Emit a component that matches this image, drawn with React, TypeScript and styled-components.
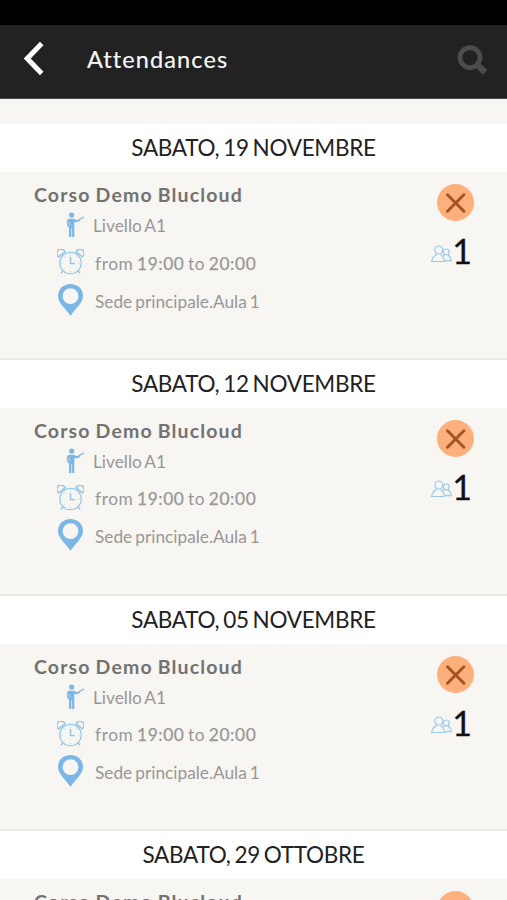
import React from "react";
import styled, { createGlobalStyle } from "styled-components";

const GlobalStyle = createGlobalStyle`
  * { box-sizing: border-box; }
  body { margin: 0; background: #f8f6f3; font-family: Lato, "Open Sans", sans-serif; }
`;

const Screen = styled.div`
  width: 507px;
  height: 900px;
  overflow: hidden;
  background: #f8f6f3;
`;
const StatusBar = styled.div`
  height: 25px;
  background: #000;
`;
const Toolbar = styled.header`
  display: flex;
  align-items: center;
  height: 74px;
  padding: 0 19px 6px 23px;
  background: #222;
  border-bottom: 1px solid #4b4a49;
`;
const Title = styled.h1`
  flex: 1;
  margin: 1px 0 0 42px;
  font-size: 23.5px;
  line-height: 30px;
  font-weight: 400;
  letter-spacing: 1.1px;
  color: #fafafa;
  -webkit-text-stroke: 0.15px #fafafa;
`;
const List = styled.main`
  padding-top: 25px;
`;
const Day = styled.section`
  height: 235.75px;
`;
const DayHeading = styled.h2`
  height: 48px;
  margin: 0;
  background: #fff;
  text-align: center;
  font-size: 22.5px;
  line-height: 48px;
  font-weight: 400;
  letter-spacing: -0.3px;
  word-spacing: -1.6px;
  color: #222;
`;
const Lesson = styled.div`
  display: flex;
  justify-content: space-between;
  height: 187.75px;
  padding: 11px 33px 0 34px;
  border-bottom: 2px solid #ebeae8;
`;
const Course = styled.h3`
  margin: -1px 0 1px;
  font-size: 19.5px;
  line-height: 25px;
  font-weight: 700;
  letter-spacing: 1.15px;
  word-spacing: -1px;
  color: #737271;
`;
const Detail = styled.div<{ $height: number; $gap: number }>`
  display: flex;
  align-items: center;
  height: ${(p) => p.$height}px;
  margin-left: 23px;
  gap: ${(p) => p.$gap}px;
`;
const DetailText = styled.span<{ $spacing?: number; $top?: number }>`
  padding-top: ${(p) => p.$top ?? 2}px;
  font-size: 17.3px;
  line-height: 24px;
  letter-spacing: ${(p) => p.$spacing ?? 0}px;
  word-spacing: -1.4px;
  color: #989795;
`;
const Time = styled.span`
  -webkit-text-stroke: 0.25px #989795;
`;
const Summary = styled.div`
  display: flex;
  flex-direction: column;
  align-items: flex-end;
`;
const Absent = styled.div`
  display: flex;
  align-items: center;
  justify-content: center;
  width: 37px;
  height: 37px;
  margin-top: 1px;
  border-radius: 50%;
  background: #fdaf7c;
`;
const Count = styled.div`
  display: flex;
  align-items: center;
  height: 40px;
  margin: 10px 2px 0 0;
  font-size: 34px;
  line-height: 40px;
  color: #111;
  -webkit-text-stroke: 0.3px #111;

  svg { margin-top: 6px; }
`;

const BackIcon = () => (
  <svg width="22" height="36" viewBox="0 0 22 36" fill="none" stroke="#fff" strokeWidth="5">
    <path d="M18.7 2.5 4.2 17.5l14.5 15" />
  </svg>
);
const SearchIcon = () => (
  <svg width="32" height="32" viewBox="0 0 32 32" fill="none" stroke="#4c4c4c">
    <circle cx="14" cy="14.6" r="10" strokeWidth="4.8" />
    <path d="M20.5 21 29 29.4" strokeWidth="6.4" />
  </svg>
);
const TeacherIcon = () => (
  <svg width="30" height="26" viewBox="0 0 30 26" fill="#7bb6e6">
    <circle cx="14.7" cy="3.1" r="2.6" />
    <path d="M12 6.8h5.2l2.6 1.4 3-1.3.7 1.4-3.7 2.2-2.5-.7V25h-2.2v-9h-.7v9H12v-9.5c-1.3-1.2-2.2-2.7-2.2-4.6 0-2.3.8-3.9 2.2-4.1Z" />
    <path d="m21.5 8 5.4-3" stroke="#7bb6e6" strokeWidth="1.2" />
    <path d="m12.2 9.8-.7 1.6 1.5 2" fill="none" stroke="#dcebf5" strokeWidth=".8" />
  </svg>
);
const ClockIcon = () => (
  <svg width="27" height="27" viewBox="0 0 27 27" fill="none" stroke="#8fc3eb" strokeWidth="1.1">
    <circle cx="13.5" cy="14" r="10.8" />
    <path d="M1.8 7.8a4.2 4.2 0 1 1 6.2-5Zm23.4 0a4.2 4.2 0 1 0-6.2-5ZM6 21.8l-2 2.6m17-2.6 2 2.6" strokeWidth="1.4" />
    <path d="M13.5 8v6.6h4.3" strokeWidth="1.4" />
    <path d="M13.5 4.8v1.4m0 15.8v1.3M4.3 14h1.4m15.6 0h1.4M7 7.5l1 1m12-1-1 1M7 20.5l1-1m12 1-1-1" strokeWidth=".7" />
  </svg>
);
const PinIcon = () => (
  <svg width="27" height="33" viewBox="0 0 27 33" fill="#7bb6e6" fillRule="evenodd">
    <path d="M13.5 0C6.5 0 1 5 1 11.9c0 7 7.4 12.2 12.5 19.9C18.6 24.1 26 18.9 26 11.9 26 5 20.5 0 13.5 0Zm0 4.3a7.9 7.9 0 1 1 0 15.8 7.9 7.9 0 0 1 0-15.8Z" />
  </svg>
);
const CrossIcon = () => (
  <svg width="21" height="21" viewBox="0 0 21 21" fill="none" stroke="#a5531f" strokeWidth="2.9" strokeLinecap="round">
    <path d="m2.5 2.8 16.4 16.4M18.9 2.8 2.5 19.2" />
  </svg>
);
const PeopleIcon = () => (
  <svg width="21" height="19" viewBox="0 0 21 19" fill="none" stroke="#9bc9eb" strokeWidth="1.2">
    <circle cx="7.8" cy="5" r="4" />
    <path d="M5.8 9.4C2.4 11.2.9 13 .7 16.5h12.7c-.2-3.5-1.2-5.3-3.9-7.1" />
    <circle cx="15.2" cy="6.9" r="2.9" />
    <path d="M13.5 10.2c-.7.3-1 .6-1.3 1M17 9.9c2.1 1.2 3.1 3 3.3 5.8h-6.7" />
  </svg>
);

const days = [
  "SABATO, 19 NOVEMBRE",
  "SABATO, 12 NOVEMBRE",
  "SABATO, 05 NOVEMBRE",
  "SABATO, 29 OTTOBRE",
];

export default function App() {
  return (
    <Screen>
      <GlobalStyle />
      <StatusBar />
      <Toolbar>
        <BackIcon />
        <Title>Attendances</Title>
        <SearchIcon />
      </Toolbar>
      <List>
        {days.map((day) => (
          <Day key={day}>
            <DayHeading>{day}</DayHeading>
            <Lesson>
              <div>
                <Course>Corso Demo Blucloud</Course>
                <Detail $height={34} $gap={6}>
                  <TeacherIcon />
                  <DetailText>Livello A1</DetailText>
                </Detail>
                <Detail $height={41} $gap={11}>
                  <ClockIcon />
                  <DetailText $spacing={0.6}>
                    from <Time>19:00</Time> to <Time>20:00</Time>
                  </DetailText>
                </Detail>
                <Detail $height={34} $gap={11}>
                  <PinIcon />
                  <DetailText $top={3}>Sede principale.Aula 1</DetailText>
                </Detail>
              </div>
              <Summary>
                <Absent><CrossIcon /></Absent>
                <Count><PeopleIcon />1</Count>
              </Summary>
            </Lesson>
          </Day>
        ))}
      </List>
    </Screen>
  );
}
